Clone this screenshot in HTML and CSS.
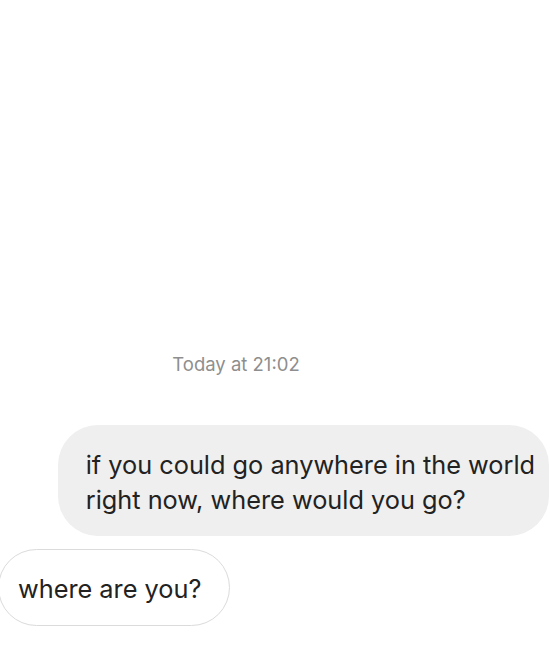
FILE: index.html
```html
<!DOCTYPE html>
<html lang="en">
<head>
    <meta charset="UTF-8">
    <meta name="viewport" content="width=device-width, initial-scale=1.0">
    <title>Chat</title>
    <link rel="stylesheet" href="styles.css">
</head>
<body>
    <div class="thread">
        <div class="timestamp">Today at 21:02</div>

        <div class="message sent">
            if you could go anywhere in the world<br>
            right now, where would you go?
        </div>

        <div class="message received">where are you?</div>
    </div>
</body>
</html>
```

FILE: styles.css
```css
body {
    margin: 0;
    background-color: #fff;
    font-family: Inter, "Noto Sans", sans-serif;
    color: #222;
}
.thread {
    height: 655px;
    display: flex;
    flex-direction: column;
    justify-content: flex-end;
    padding-bottom: 29px;
    box-sizing: border-box;
    overflow: hidden;
}
.timestamp {
    align-self: center;
    font-size: 18.5px;
    color: #8e8e8e;
    margin-bottom: 50px;
    padding-right: 78px;
}
.message {
    font-size: 25.3px;
    line-height: 35px;
    border-radius: 40px;
}
.sent {
    align-self: flex-end;
    margin-right: 1px;
    background-color: #efefef;
    padding: 22px 14px 19px 28px;
}
.received {
    align-self: flex-start;
    margin-left: -2px;
    margin-top: 13px;
    border: 1px solid #dbdbdb;
    padding: 21px 28px 19px 19px;
}
```
